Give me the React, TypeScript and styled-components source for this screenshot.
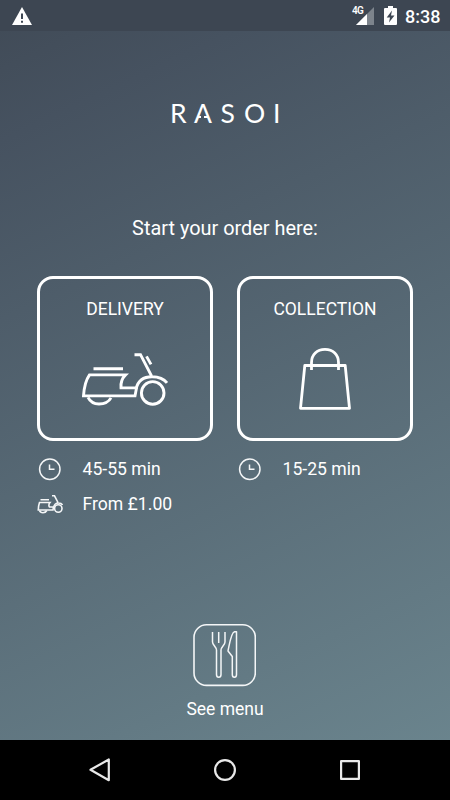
import React from 'react';
import styled, { createGlobalStyle } from 'styled-components';

const GlobalStyle = createGlobalStyle`
  * { box-sizing: border-box; }
  body { margin: 0; background: #000; }
  button { font: inherit; color: inherit; background: none; padding: 0; margin: 0; }
  svg { display: block; flex: none; }
`;

const Screen = styled.div`
  width: 450px;
  height: 800px;
  display: flex;
  flex-direction: column;
  overflow: hidden;
  color: #fff;
  font-family: Roboto, sans-serif;
  background: linear-gradient(155deg, #404a56 0%, #465260 14%, #6b858e 96%, #6d8790 100%);
`;

const StatusBar = styled.header`
  height: 31px;
  flex: none;
  display: flex;
  align-items: center;
  justify-content: space-between;
  padding: 0 10px 0 12px;
  background: #3d4652;
`;

const StatusGroup = styled.div`
  display: flex;
  align-items: center;
`;

const NetworkLabel = styled.span`
  align-self: flex-start;
  width: 12px;
  margin: 6px -8px 0 0;
  font-size: 10px;
  line-height: 12px;
  font-weight: 600;
  letter-spacing: -0.8px;
  z-index: 1;
`;

const BatterySlot = styled.span`
  margin-left: 10px;
`;

const Clock = styled.span`
  width: 35px;
  margin-left: 8px;
  font-size: 18px;
  line-height: 31px;
  font-weight: 500;
  white-space: nowrap;
  padding-top: 2px;
`;

const Main = styled.main`
  flex: 1;
  display: flex;
  flex-direction: column;
  align-items: center;
  padding-top: 65px;
`;

const Logo = styled.h1`
  width: 110px;
  height: 34px;
  margin: 0;
  display: grid;
  grid-template-columns: 24px 26.5px 23.5px 29px 7px;
  font: 400 26.5px/34px Lato, sans-serif;
`;

const Letter = styled.span<{ $notched?: boolean }>`
  position: relative;
  &::after {
    content: '';
    display: ${p => (p.$notched ? 'block' : 'none')};
    position: absolute;
    left: 7px;
    top: 18px;
    width: 3px;
    height: 4px;
    background: #4a5562;
  }
`;

const Heading = styled.h2`
  margin: 85px 0 0;
  font-size: 19.9px;
  line-height: 28px;
  font-weight: 400;
  white-space: nowrap;
`;

const Options = styled.section`
  display: grid;
  grid-template-columns: 176px 176px;
  gap: 24px;
  margin-top: 33px;
`;

const Option = styled.div`
  display: flex;
  flex-direction: column;
`;

const Card = styled.button`
  width: 176px;
  height: 165px;
  border: 3px solid #fff;
  border-radius: 16px;
  display: flex;
  flex-direction: column;
  align-items: center;
  padding-top: 18px;
  margin-bottom: 11px;
`;

const CardTitle = styled.span`
  font-size: 17.5px;
  line-height: 24px;
  margin-bottom: 24px;
`;

const Detail = styled.div`
  height: 35px;
  display: grid;
  grid-template-columns: 45.5px 1fr;
  align-items: center;
  font-size: 17.6px;
  line-height: 35px;
`;

const MenuButton = styled.button`
  margin-top: auto;
  margin-bottom: 18px;
  border: 0;
  display: flex;
  flex-direction: column;
  align-items: center;
  font-size: 17.5px;
  line-height: 26px;
`;

const MenuTile = styled.span`
  width: 63px;
  height: 63px;
  margin-bottom: 9px;
  display: flex;
`;

const NavBar = styled.nav`
  height: 60px;
  flex: none;
  display: grid;
  grid-template-columns: 125px 125px 125px;
  justify-content: center;
  justify-items: center;
  align-items: center;
  background: #000;
`;

const Scooter = () => (
  <svg width="90" height="62" viewBox="80 342.600 90 62" fill="none" stroke="#fff" strokeWidth="2.900">
    <path d="M93.500 366.300H123M89.500 372.500H125.500C123 375 120.500 380 121 385.500H136.500L135 393.500H83.500C84 386 86 377.500 89.500 372.500Z" />
    <path d="M136 386.500C138 378 144 374.300 152 374.300C159 374.300 164 376.500 167 380.500M134.500 352.300H140.500L151.500 373.500M146.500 354L151 362" />
    <circle cx="152.700" cy="390.500" r="11.300" />
    <path d="M88 395C90 399 94 401.600 99 401.600C104.500 401.600 109 399 111 395.500" />
  </svg>
);

const Bag = () => (
  <svg width="56" height="66" viewBox="297 345 56 66" fill="none" stroke="#fff" strokeWidth="2.800">
    <path d="M304.800 365.500H345.200L349.500 408.300H300.500Z" strokeLinejoin="round" />
    <path d="M311.500 370V362.500C311.500 354.500 317 349.300 325 349.300S338.500 354.500 338.500 362.500V370" />
  </svg>
);

const ClockIcon = () => (
  <svg width="26" height="26" viewBox="37 456 26 26" fill="none" stroke="#f4f6f7" strokeWidth="1.500">
    <circle cx="49.800" cy="468.300" r="10.200" />
    <path d="M49.500 463.500V468.300H54.500" />
  </svg>
);

const SmallScooter = () => (
  <svg width="26" height="20" viewBox="37 494 26 20" fill="none" stroke="#f4f6f7" strokeWidth="1.600">
    <path d="M40.500 498.700H49M39.500 501.500H50C48.800 503 48.800 505 49.500 506H53.500L53 509H38.300C38.300 506 38.800 503.500 39.500 501.500Z" />
    <path d="M53.500 507C54 503.500 56.500 502 58.500 502C60.500 502 62 502.800 62.500 504M52 494.800H54.500L58 501.500" />
    <circle cx="58.300" cy="507.500" r="3.700" />
    <path d="M39.500 509.500C40 511 41.500 511.700 43 511.700S46 511 46.800 509.500" />
  </svg>
);

const Cutlery = () => (
  <svg width="63" height="63" viewBox="193 624 63 63" fill="none" stroke="#f4f6f7" strokeWidth="1.500" strokeLinejoin="round">
    <rect x="194" y="624.800" width="61.300" height="60.600" rx="12.500" strokeWidth="1.600" />
    <path d="M212.500 632V642C212.500 645 216.500 647 216.500 650V674.500C216.500 678.300 221 678.300 221 674.500V650C221 647 225 645 225 642V632M218.700 632V643" />
    <path d="M236.500 631.700V674.500C236.500 678.300 232.300 678.300 232.300 674.500V656.500L228 651C229.500 644 231 632.500 234.500 631.700Z" />
  </svg>
);

const Warning = () => (
  <svg width="20" height="18" viewBox="0 0 20 18">
    <path d="M10 0L20 18H0Z" fill="#fff" />
    <path d="M10 6.500V12M10 13.700V15.700" stroke="#3e4753" strokeWidth="2" />
  </svg>
);

const Signal = () => (
  <svg width="18" height="18" viewBox="0 0 18 18">
    <path d="M18 0V18H0Z" fill="#7d848c" />
    <path d="M11 7V18H0Z" fill="#fff" />
  </svg>
);

const Battery = () => (
  <svg width="13" height="19" viewBox="0 0 13 19">
    <path d="M4 0H9V2H12Q13 2 13 3V18Q13 19 12 19H1Q0 19 0 18V3Q0 2 1 2H4Z" fill="#fff" />
    <path d="M8 4.500L2.700 11.500H6L5 16.500L10.500 9.500H7Z" fill="#3e4753" />
  </svg>
);

export default function App() {
  return (
    <Screen>
      <GlobalStyle />
      <StatusBar>
        <Warning />
        <StatusGroup>
          <NetworkLabel>4G</NetworkLabel>
          <Signal />
          <BatterySlot><Battery /></BatterySlot>
          <Clock>8:38</Clock>
        </StatusGroup>
      </StatusBar>
      <Main>
        <Logo>
          <Letter>R</Letter>
          <Letter $notched>A</Letter>
          <Letter>S</Letter>
          <Letter>O</Letter>
          <Letter>I</Letter>
        </Logo>
        <Heading>Start your order here:</Heading>
        <Options>
          <Option>
            <Card><CardTitle>DELIVERY</CardTitle><Scooter /></Card>
            <Detail><ClockIcon /><span>45-55 min</span></Detail>
            <Detail><SmallScooter /><span>From £1.00</span></Detail>
          </Option>
          <Option>
            <Card><CardTitle>COLLECTION</CardTitle><Bag /></Card>
            <Detail><ClockIcon /><span>15-25 min</span></Detail>
          </Option>
        </Options>
        <MenuButton>
          <MenuTile><Cutlery /></MenuTile>
          <span>See menu</span>
        </MenuButton>
      </Main>
      <NavBar>
        <svg width="26" height="26" viewBox="87 757 26 26" fill="none" stroke="#e8e8e8" strokeWidth="2.200" strokeLinejoin="round">
          <path d="M90.500 769.800L108.800 759.500V780.200Z" />
        </svg>
        <svg width="26" height="26" viewBox="0 0 26 26" fill="none" stroke="#e8e8e8" strokeWidth="2.200">
          <circle cx="13" cy="13" r="9.900" />
        </svg>
        <svg width="26" height="26" viewBox="0 0 26 26" fill="none" stroke="#e8e8e8" strokeWidth="2.200" strokeLinejoin="round">
          <path d="M4.100 4.100H21.900V21.900H4.100Z" />
        </svg>
      </NavBar>
    </Screen>
  );
}
